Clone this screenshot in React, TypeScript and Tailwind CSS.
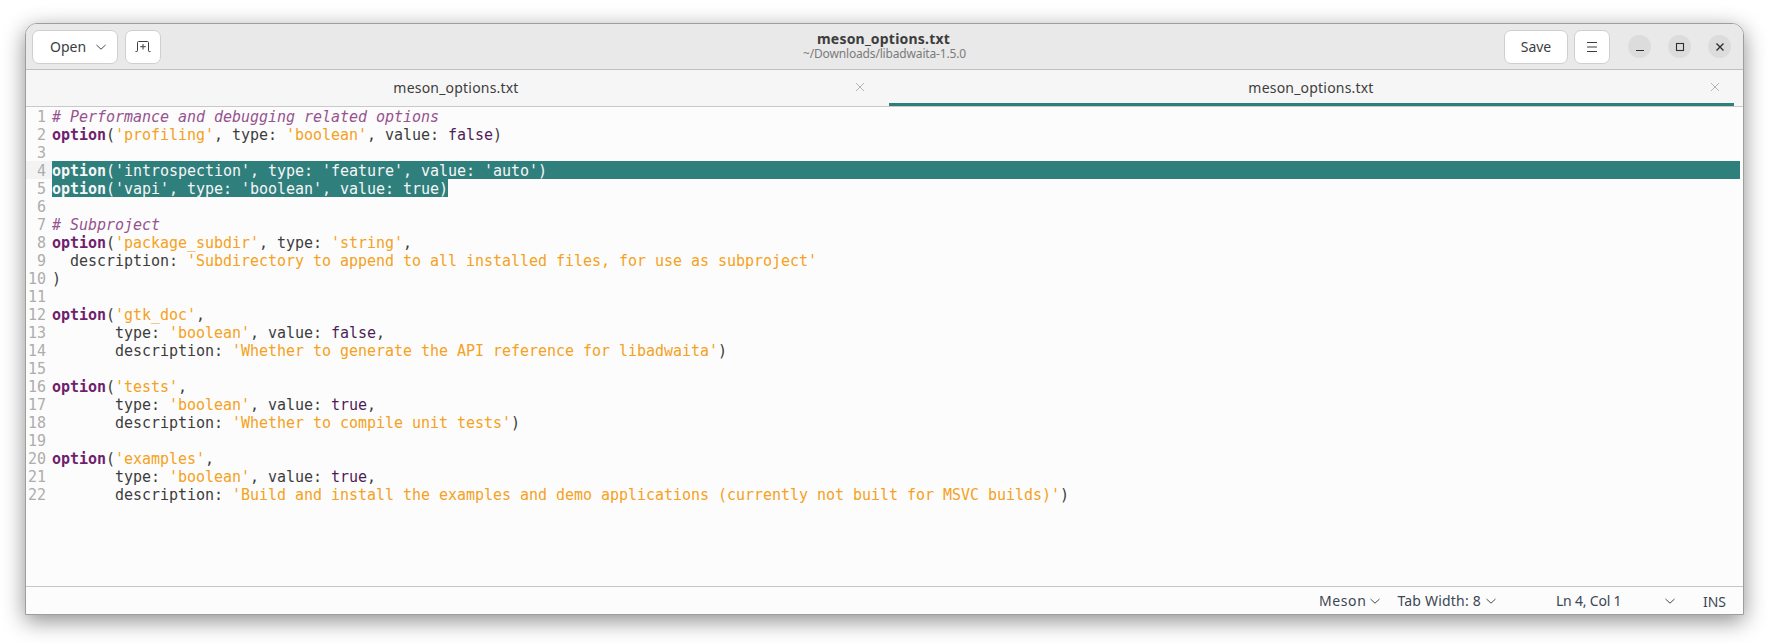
const mono = "font-['DejaVu_Sans_Mono',monospace]";

type Tok = [string, "k" | "s" | "c" | "b" | "p"];

const KIND: Record<string, string> = {
  k: "font-bold text-[#6f1f6e]",
  s: "text-[#f5a121]",
  c: "italic text-[#96538f]",
  b: "text-[#4f1d56]",
  p: "text-[#3d3d3d]",
};

const LINES: Tok[][] = [
  [["# Performance and debugging related options", "c"]],
  [["option", "k"], ["(", "p"], ["'profiling'", "s"], [", type: ", "p"], ["'boolean'", "s"], [", value: ", "p"], ["false", "b"], [")", "p"]],
  [],
  [["option", "k"], ["(", "p"], ["'introspection'", "s"], [", type: ", "p"], ["'feature'", "s"], [", value: ", "p"], ["'auto'", "s"], [")", "p"]],
  [["option", "k"], ["(", "p"], ["'vapi'", "s"], [", type: ", "p"], ["'boolean'", "s"], [", value: ", "p"], ["true", "b"], [")", "p"]],
  [],
  [["# Subproject", "c"]],
  [["option", "k"], ["(", "p"], ["'package_subdir'", "s"], [", type: ", "p"], ["'string'", "s"], [",", "p"]],
  [["  description: ", "p"], ["'Subdirectory to append to all installed files, for use as subproject'", "s"]],
  [[")", "p"]],
  [],
  [["option", "k"], ["(", "p"], ["'gtk_doc'", "s"], [",", "p"]],
  [["       type: ", "p"], ["'boolean'", "s"], [", value: ", "p"], ["false", "b"], [",", "p"]],
  [["       description: ", "p"], ["'Whether to generate the API reference for libadwaita'", "s"], [")", "p"]],
  [],
  [["option", "k"], ["(", "p"], ["'tests'", "s"], [",", "p"]],
  [["       type: ", "p"], ["'boolean'", "s"], [", value: ", "p"], ["true", "b"], [",", "p"]],
  [["       description: ", "p"], ["'Whether to compile unit tests'", "s"], [")", "p"]],
  [],
  [["option", "k"], ["(", "p"], ["'examples'", "s"], [",", "p"]],
  [["       type: ", "p"], ["'boolean'", "s"], [", value: ", "p"], ["true", "b"], [",", "p"]],
  [["       description: ", "p"], ["'Build and install the examples and demo applications (currently not built for MSVC builds)'", "s"], [")", "p"]],
];

function Chevron({ className = "" }: { className?: string }) {
  return (
    <svg width="12" height="12" viewBox="0 0 12 12" fill="none" className={className}>
      <path d="M1.5 4 L6 8.2 L10.5 4" stroke="#4a4a4a" strokeWidth="1" />
    </svg>
  );
}

function HeaderButton({ className, children }: { className: string; children: React.ReactNode }) {
  return (
    <div className={`h-[34px] flex items-center justify-center bg-white border border-[#cfcfcf] rounded-[7px] text-[#3d3d3d] ${className}`}>
      {children}
    </div>
  );
}

function WinButton({ children }: { children: React.ReactNode }) {
  return <div className="w-[23px] h-[23px] rounded-full bg-[#dcdcdc] flex items-center justify-center">{children}</div>;
}

function Tab({ active }: { active?: boolean }) {
  return (
    <div className={`flex-1 h-full flex items-center border-b-[3px] ${active ? "border-[#2e7f7c]" : "border-transparent"}`}>
      <span className="flex-1 text-center text-[14px] tracking-[0.2px] text-[#3d3d3d] pl-[23px] pt-[1px]">meson_options.txt</span>
      <svg width="10" height="10" viewBox="0 0 10 10" className="mr-[14px]">
        <path d="M1 1 L9 9 M9 1 L1 9" stroke="#b5b5b5" strokeWidth="1" />
      </svg>
    </div>
  );
}

function CodeLine({ n, toks }: { n: number; toks: Tok[] }) {
  const selFull = n === 4;
  const selPart = n === 5;
  const sel = selFull || selPart;
  return (
    <div className="flex h-[18px] leading-[20px]">
      <div className={`w-[26px] shrink-0 text-right pr-[6px] text-[#adadad] ${selFull ? "bg-[#f3f3f3] text-[#8e8e8e]" : ""}`}>{n}</div>
      <div className={`${selFull ? "flex-1 mr-[3px]" : ""} ${sel ? "bg-[#2f7f7d]" : ""} whitespace-pre tracking-[-0.03px]`}>
        {toks.map(([t, k], i) => (
          <span key={i} className={sel ? `text-[#f6f6f6] ${k === "k" ? "font-bold" : ""}` : KIND[k]}>{t}</span>
        ))}
      </div>
    </div>
  );
}

export default function App() {
  return (
    <div className="w-[1769px] h-[643px] bg-white pt-[23px] pl-[25px] overflow-hidden font-['Noto_Sans',sans-serif]">
      <div className="w-[1719px] h-[592px] flex flex-col rounded-t-[12px] border border-[#9e9e9e] bg-[#fcfcfc] shadow-[0_6px_22px_rgba(0,0,0,0.45)] overflow-hidden">
        {/* header bar */}
        <div className="h-[46px] shrink-0 flex items-center px-[6px] bg-[#e9e9e9] border-b border-[#c0c0c0]">
          <div className="flex-1 flex gap-[7px]">
            <HeaderButton className="w-[86px] gap-[9px] text-[14px] pl-[7px]">
              <span>Open</span>
              <Chevron />
            </HeaderButton>
            <HeaderButton className="w-[36px]">
              <svg width="16" height="12" viewBox="0 0 16 12" fill="none" stroke="#3d3d3d" strokeWidth="1">
                <path d="M0.5 10.5 H1.8 C2.3 10.5 2.5 10.2 2.5 9.7 V1.5 C2.5 0.9 2.9 0.5 3.5 0.5 H12.5 C13.1 0.5 13.5 0.9 13.5 1.5 V9.7 C13.5 10.2 13.7 10.5 14.2 10.5 H15.5" />
                <path d="M8 3 V8.5 M5.2 5.7 H10.8" />
              </svg>
            </HeaderButton>
          </div>
          <div className="flex flex-col items-center -mt-[2px]">
            <span className="text-[14px] leading-[17px] tracking-[0.2px] font-bold text-[#3d3d3d] pr-[2px]">meson_options.txt</span>
            <span className="text-[12px] leading-[14px] tracking-[-0.16px] text-[#7b7b7b]">~/Downloads/libadwaita-1.5.0</span>
          </div>
          <div className="flex-1 flex items-center justify-end">
            <HeaderButton className="w-[64px] text-[14px] mr-[6px]">Save</HeaderButton>
            <HeaderButton className="w-[36px] mr-[18px]">
              <svg width="12" height="12" viewBox="0 0 12 12" stroke="#3d3d3d" strokeWidth="1">
                <path d="M1 1.5 H11 M1 6 H11 M1 10.5 H11" />
              </svg>
            </HeaderButton>
            <div className="flex gap-[17px] mr-[6px]">
              <WinButton>
                <svg width="10" height="10" viewBox="0 0 10 10" stroke="#2e2e2e" strokeWidth="1.2">
                  <path d="M1 8.5 H9" />
                </svg>
              </WinButton>
              <WinButton>
                <svg width="10" height="10" viewBox="0 0 10 10" fill="none" stroke="#2e2e2e" strokeWidth="1.1">
                  <rect x="1.5" y="1.5" width="7" height="7" />
                </svg>
              </WinButton>
              <WinButton>
                <svg width="10" height="10" viewBox="0 0 10 10" stroke="#2e2e2e" strokeWidth="1.4">
                  <path d="M1.5 1.5 L8.5 8.5 M8.5 1.5 L1.5 8.5" />
                </svg>
              </WinButton>
            </div>
          </div>
        </div>

        {/* tabs */}
        <div className="h-[37px] shrink-0 flex gap-[10px] pl-[8px] pr-[9px] bg-[#f6f6f6] border-b border-[#c9c9c9]">
          <Tab />
          <Tab active />
        </div>

        {/* editor */}
        <div className={`flex-1 text-[15px] ${mono}`}>
          {LINES.map((toks, i) => (
            <CodeLine key={i} n={i + 1} toks={toks} />
          ))}
        </div>

        {/* status bar */}
        <div className="h-[28px] shrink-0 flex items-center border-t border-[#c6c6c6] text-[14px] text-[#3d4654]">
          <div className="flex-1" />
          <span className="tracking-[0.6px]">Meson</span>
          <Chevron className="ml-[3px] mr-[16px]" />
          <span className="tracking-[0.2px]">Tab Width: 8</span>
          <Chevron className="ml-[4px] mr-[59px]" />
          <span className="w-[108px] tracking-[-0.2px]">Ln 4, Col 1</span>
          <Chevron className="mr-[27px]" />
          <span className="mr-[17px] pt-[2px]">INS</span>
        </div>
      </div>
    </div>
  );
}
